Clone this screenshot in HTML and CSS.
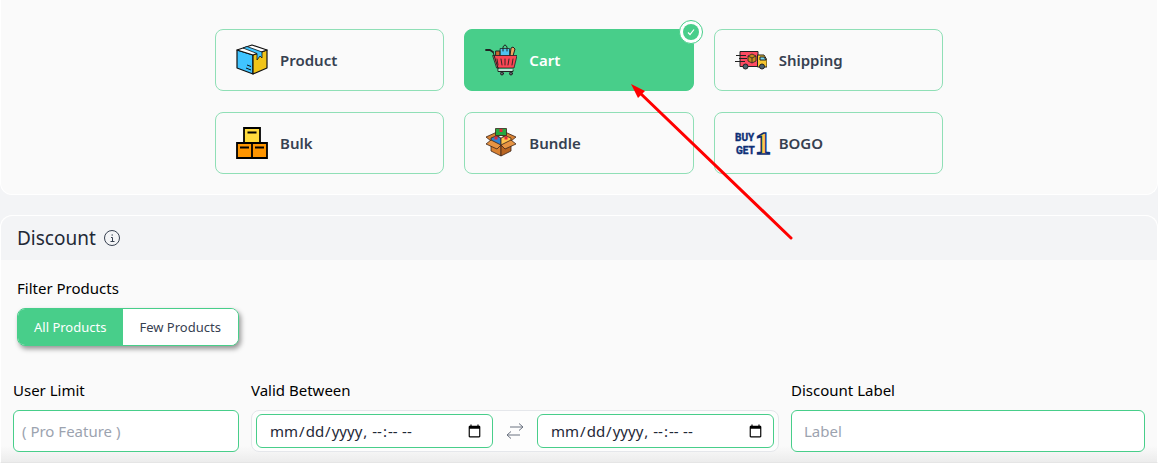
FILE: index.html
```html
<!DOCTYPE html>
<html lang="en">
<head>
    <meta charset="UTF-8">
    <title>Discount</title>
    <link rel="stylesheet" href="styles.css">
</head>
<body>
<section class="types">
    <div class="type-list">
        <button type="button" class="type">
            <svg class="type-icon" viewBox="0 0 32 32" stroke="#111" stroke-width="1.2" stroke-linejoin="round">
                <path fill="#40c4ff" d="M1 6 17 11V30L1 24Z"/>
                <path fill="#f0c419" d="M17 11 31 6V24L17 30Z"/>
                <path fill="#fff" d="M1 6 16 1 31 6 17 11Z"/>
                <path fill="#40c4ff" stroke-width="0.8" d="M7 4 11 2.500 26 8V14L24 12 21 16V9.500Z"/>
                <path fill="none" stroke-width="1" d="M11 21l4 1.500M10 24l5 2"/>
            </svg>
            Product
        </button>
        <button type="button" class="type active">
            <svg class="type-icon" viewBox="0 0 32 32" stroke="#222" stroke-linejoin="round" stroke-linecap="round">
                <path fill="#c96a30" d="M11 7h4v5h-4z"/>
                <path fill="#f2a35e" d="M25 12l1-8 2-1 2 2-2 7z"/>
                <path fill="#4fc3f0" stroke-width="0.8" d="M15.500 4.500h9V12h-9z"/>
                <path fill="none" d="M18 7V3q2-4 4 0v4"/>
                <path fill="#fa4654" stroke-width="0.8" d="M8 11.500h24L29 24H12Z"/>
                <path fill="none" stroke-width="0.9" d="M12 15l1 6M16 15l1 6M20 15v6M24 15l-1 6M28 15l-1 6"/>
                <path fill="none" stroke-width="1.800" d="M1 6h4l3 2"/>
                <path fill="none" d="M8 8l5 16"/>
                <path fill="none" d="M13 24v3.500h15V26"/>
                <path fill="none" stroke="#e4e8ed" stroke-width="1.500" d="M14 26h13"/>
                <circle cx="17" cy="29.500" r="1.500" fill="#667"/>
                <circle cx="26" cy="29.500" r="1.500" fill="#667"/>
            </svg>
            Cart
            <span class="check">
                <svg viewBox="0 0 16 16"><path d="M5 8.500l2 2 4-5"/></svg>
            </span>
        </button>
        <button type="button" class="type">
            <svg class="type-icon" viewBox="0 0 32 32" stroke="#222" stroke-linejoin="round">
                <path fill="#ff4b62" d="M5 7.500h18v15H5z"/>
                <path fill="#f7c62f" d="M22.500 11H29l3 5v7h-9.500z"/>
                <path fill="#76dcf5" d="M25 13h4l2 3h-6z"/>
                <path fill="none" d="M1 11.500h10M4 14.500h8M0 17.500h10"/>
                <path fill="#c9891c" stroke-width="0.8" d="M17 10l4 2v5l-4 2-4-2v-5z"/>
                <path fill="none" stroke-width="0.8" d="M13 12l4 2 4-2M17 14v5"/>
                <circle cx="10.500" cy="22.500" r="2.500" fill="#4c626e"/>
                <circle cx="27" cy="22.500" r="2.500" fill="#4c626e"/>
            </svg>
            Shipping
        </button>
        <button type="button" class="type">
            <svg class="type-icon" viewBox="0 0 32 32" stroke="#000" stroke-width="1.800">
                <path fill="#ffdb3d" d="M8 1h16v15H8z"/>
                <path fill="#ff9500" d="M1 16h15v15H1zM16 16h15v15H16z"/>
                <path d="M11.500 5.500h9M4 20.500h9M19 20.500h9"/>
            </svg>
            Bulk
        </button>
        <button type="button" class="type">
            <svg class="type-icon" viewBox="0 0 32 32" stroke="#3b241b" stroke-width="0.8" stroke-linejoin="round">
                <path fill="#d98232" d="M1 10 12 5l4 3-10 6zM31 10 20 5l-4 3 10 6z"/>
                <path fill="#2f83d1" d="M6 11l5-2 5 2v9L6 15z"/>
                <path fill="#ffc34d" d="M16 11l5-2 5 2v4l-10 5z"/>
                <path fill="#26a841" d="M10.500 1.500h11v7h-11z"/>
                <path fill="#e5243b" stroke="none" d="M14.500 2h3v3h-3zM9.500 9.500h3v3h-3zM19.500 9.500h3v3h-3z"/>
                <path fill="#d98232" d="M6 14l10 5v10L6 24z"/>
                <path fill="#b96522" d="M26 14l-10 5v10l10-5z"/>
                <path fill="#e69443" d="M6 13l10 5-4 4-11-5zM26 13l-10 5 4 4 11-5z"/>
            </svg>
            Bundle
        </button>
        <button type="button" class="type">
            <svg class="type-icon deal" viewBox="0 0 32 32">
                <text class="deal-word" x="0" y="14">BUY</text>
                <text class="deal-word" x="1" y="27">GET</text>
                <text class="deal-one" x="20" y="27">1</text>
            </svg>
            BOGO
        </button>
    </div>
    <svg class="pointer" width="164" height="158" viewBox="0 0 164 158">
        <path fill="none" stroke="#f00" stroke-width="3" stroke-linecap="round" d="M8 8 160 154"/>
        <path fill="#f00" d="M0 0 14 7 7 14Z"/>
    </svg>
</section>

<section class="discount">
    <h2 class="discount-title">
        Discount
        <svg class="info" viewBox="0 0 16 16"><circle cx="8" cy="8" r="7.500"/><path d="M7 7.500h1.500V11.500M6.500 11.500h4M7.500 5h1.500"/></svg>
    </h2>
    <div class="discount-body">
        <div class="filter">
            <div class="filter-title" id="filterTitle">Filter Products</div>
            <div class="toggle" role="group" aria-labelledby="filterTitle">
                <button type="button" class="active">All Products</button>
                <button type="button">Few Products</button>
            </div>
        </div>
        <div class="fields">
            <div class="field">
                <label for="userLimit">User Limit</label>
                <input type="text" id="userLimit" class="text limit" placeholder="( Pro Feature )">
            </div>
            <div class="field">
                <label for="validFrom">Valid Between</label>
                <div class="range">
                    <input type="datetime-local" id="validFrom">
                    <svg class="swap" viewBox="0 0 16 16"><path d="M3 4h13M12 0.500l4 3.500-4 3.500M13 12H0M4 8.500l-4 3.500 4 3.500"/></svg>
                    <input type="datetime-local" id="validTo" aria-label="Valid until">
                </div>
            </div>
            <div class="field">
                <label for="discountLabel">Discount Label</label>
                <input type="text" id="discountLabel" class="text" placeholder="Label">
            </div>
        </div>
    </div>
</section>
</body>
</html>
```
FILE: styles.css
```css
*{
    box-sizing: border-box;
    margin: 0;
    padding: 0;
}
html{
    background: #fff;
}
body{
    background: #f3f4f6;
    font-family: "Noto Sans", "Open Sans", sans-serif;
    font-size: 15px;
    line-height: 24px;
    color: #000;
}
button, input{
    font: inherit;
}
.types{
    position: relative;
    padding: 29px 16px 20px;
    background: #fafafa;
    border: 1px solid #fff;
    border-top: 0;
    border-radius: 0 0 12px 12px;
}
.type-list{
    display: grid;
    grid-template-columns: repeat(3, 1fr);
    gap: 21px 20px;
    max-width: 728px;
    margin: 0 auto;
}
.type{
    position: relative;
    display: flex;
    align-items: center;
    gap: 12px;
    padding: 14px 20px;
    background: none;
    border: 1px solid #8fdfb6;
    border-radius: 8px;
    color: #374151;
    font-weight: 600;
}
.type.active{
    background: #48ce8a;
    border-color: #48ce8a;
    color: #fff;
}
.type-icon{
    width: 32px;
    height: 32px;
}
.deal{
    overflow: visible;
}
.deal-word{
    font: bold 10px Roboto, sans-serif;
    fill: #0d2f76;
    stroke: #0d2f76;
    stroke-width: 0.4px;
}
.deal-one{
    font: bold 32px "Liberation Serif", serif;
    fill: #ffc84a;
    stroke: #0d2f76;
    stroke-width: 1.5px;
}
.check{
    position: absolute;
    top: -10px;
    right: -10px;
    width: 24px;
    height: 24px;
    padding: 3px;
    background: #fff;
    border: 1px solid #48ce8a;
    border-radius: 50%;
}
.check svg{
    display: block;
    background: #48ce8a;
    border-radius: 50%;
    fill: none;
    stroke: #fff;
    stroke-width: 1.2px;
}
.pointer{
    position: absolute;
    top: 84px;
    left: calc(50% + 52px);
    z-index: 2;
    pointer-events: none;
}
.discount{
    margin-top: 20px;
    background: #fafafa;
    border: 1px solid #fff;
    border-bottom-color: #e5e5e5;
    border-radius: 12px 12px 0 0;
}
.discount-title{
    display: flex;
    align-items: center;
    gap: 8px;
    padding: 8px 16px;
    background: #f3f4f6;
    border-radius: 12px 12px 0 0;
    color: #1f2937;
    font-size: 19px;
    font-weight: normal;
    line-height: 28px;
}
.info{
    width: 16px;
    height: 16px;
    fill: none;
    stroke: #374151;
}
.discount-body{
    padding: 16px 12px 10px;
    background: linear-gradient(to top, #ececec, #fafafa 16px);
}
.filter{
    padding: 0 4px;
    margin-bottom: 32px;
}
.toggle{
    display: inline-flex;
    margin-top: 8px;
    overflow: hidden;
    vertical-align: top;
    background: #fff;
    border: 1px solid #48ce8a;
    border-radius: 8px;
    box-shadow: 2px 3px 5px rgba(0, 0, 0, 0.4);
}
.toggle button{
    padding: 6px 17px 6px 16px;
    background: #fff;
    border: 0;
    color: #374151;
    font-size: 13px;
}
.toggle .active{
    background: #48ce8a;
    color: #fff;
}
.fields{
    display: grid;
    grid-template-columns: 226fr 528fr 354fr;
    gap: 12px;
}
.field label{
    display: block;
    margin-bottom: 8px;
}
.text{
    display: block;
    width: 100%;
    height: 42px;
    padding: 0 12px;
    background: #fff;
    border: 1px solid #48ce8a;
    border-radius: 6px;
}
.limit{
    padding: 0 8px;
}
.text::placeholder{
    color: #9ca3af;
}
.range{
    display: flex;
    align-items: center;
    height: 42px;
    padding: 0 4px;
    background: #fdfdfd;
    border: 1px solid #e5e7eb;
    border-radius: 8px;
}
.range input{
    flex: 1;
    min-width: 0;
    height: 34px;
    padding: 0 8px 0 12px;
    background: #fff;
    border: 1px solid #48ce8a;
    border-radius: 6px;
    color: #1f2937;
}
.swap{
    width: 16px;
    height: 16px;
    margin: 0 14px;
    fill: none;
    stroke: #6b7280;
}
```
